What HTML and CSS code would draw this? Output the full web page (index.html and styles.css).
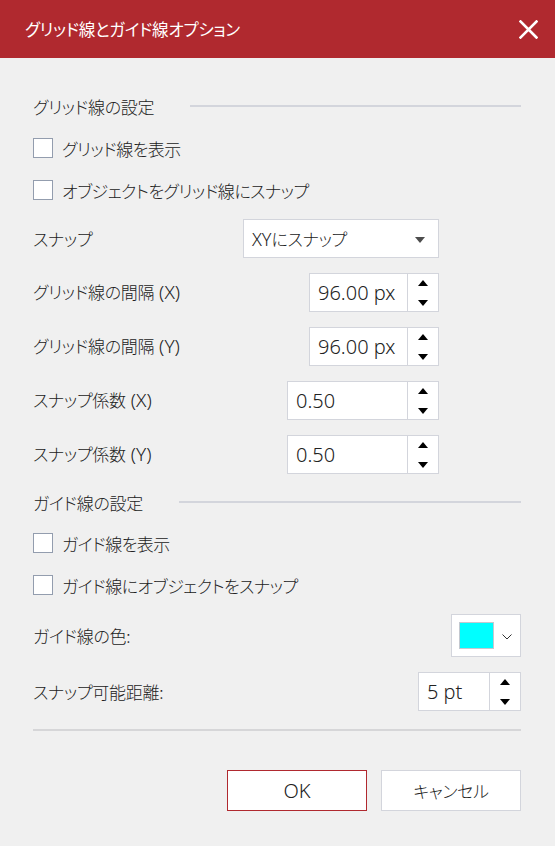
FILE: index.html
```html
<!DOCTYPE html>
<html lang="ja">
<head>
<meta charset="utf-8">
<title>グリッド線とガイド線オプション</title>
<link rel="stylesheet" href="styles.css">
</head>
<body>
<div class="dialog">
  <header class="titlebar">
    <h1 class="title">グリッド線とガイド線オプション</h1>
    <button class="close" aria-label="閉じる">
      <svg width="19" height="19" viewBox="0 0 19 19"><path d="M1.5 1.5 L17.5 17.5 M17.5 1.5 L1.5 17.5" stroke="#fff" stroke-width="2.6" stroke-linecap="square" fill="none"/></svg>
    </button>
  </header>

  <main class="content">
    <div class="section s-grid"><span class="section-title">グリッド線の設定</span><span class="rule"></span></div>

    <label class="check c-first"><span class="box"></span><span class="check-text">グリッド線を表示</span></label>
    <label class="check c-next"><span class="box"></span><span class="check-text">オブジェクトをグリッド線にスナップ</span></label>

    <div class="field grid-field f-select">
      <span class="label">スナップ</span>
      <div class="select"><span class="select-text"><span class="lat">XY</span>にスナップ</span><span class="caret"></span></div>
    </div>

    <div class="field grid-field f-spin">
      <span class="label">グリッド線の間隔<span class="lat"> (X)</span></span>
      <div class="spin spin-wide"><span class="value">96.00 px</span><span class="arrows"><i class="up"></i><i class="down"></i></span></div>
    </div>

    <div class="field grid-field f-spin">
      <span class="label">グリッド線の間隔<span class="lat"> (Y)</span></span>
      <div class="spin spin-wide"><span class="value">96.00 px</span><span class="arrows"><i class="up"></i><i class="down"></i></span></div>
    </div>

    <div class="field grid-field f-spin">
      <span class="label">スナップ係数<span class="lat"> (X)</span></span>
      <div class="spin spin-long"><span class="value">0.50</span><span class="arrows"><i class="up"></i><i class="down"></i></span></div>
    </div>

    <div class="field grid-field f-spin">
      <span class="label">スナップ係数<span class="lat"> (Y)</span></span>
      <div class="spin spin-long"><span class="value">0.50</span><span class="arrows"><i class="up"></i><i class="down"></i></span></div>
    </div>

    <div class="section s-guide"><span class="section-title">ガイド線の設定</span><span class="rule"></span></div>

    <label class="check c-guide"><span class="box"></span><span class="check-text">ガイド線を表示</span></label>
    <label class="check c-next"><span class="box"></span><span class="check-text">ガイド線にオブジェクトをスナップ</span></label>

    <div class="field f-color">
      <span class="label">ガイド線の色:</span>
      <div class="color-picker"><span class="swatch"></span>
        <svg class="chev" width="10" height="6" viewBox="0 0 10 6"><path d="M0.5 0.5 L5 5 L9.5 0.5" stroke="#333" stroke-width="1" fill="none"/></svg>
      </div>
    </div>

    <div class="field f-spin">
      <span class="label">スナップ可能距離:</span>
      <div class="spin spin-short"><span class="value">5 pt</span><span class="arrows"><i class="up"></i><i class="down"></i></span></div>
    </div>

    <div class="separator"></div>

    <div class="buttons">
      <button class="btn btn-primary"><span class="lat">OK</span></button>
      <button class="btn">キャンセル</button>
    </div>
  </main>
</div>
</body>
</html>
```

FILE: styles.css
```css
* { box-sizing: border-box; }

html, body {
  margin: 0;
  padding: 0;
}

body {
  width: 555px;
  height: 846px;
  background: #f0f0f0;
  font-family: "Noto Sans CJK JP", "Noto Sans", sans-serif;
  font-size: 17px;
  font-weight: 300;
  letter-spacing: -0.3px;
  font-feature-settings: "palt";
  color: #222;
  overflow: hidden;
}

.dialog {
  width: 555px;
  height: 846px;
  background: #f0f0f0;
}

.titlebar {
  height: 58px;
  background: #b0292f;
  display: flex;
  align-items: center;
  justify-content: space-between;
  padding: 0 17px 0 25px;
}

.title {
  margin: 0;
  font-size: 16.5px;
  font-weight: 400;
  color: #fff;
  line-height: 1;
  letter-spacing: -0.2px;
}

.close {
  border: 0;
  background: transparent;
  padding: 0;
  width: 19px;
  height: 19px;
  display: flex;
  cursor: pointer;
}

.content {
  padding: 36px 34px 0 33px;
  display: flex;
  flex-direction: column;
}

.lat {
  font-family: "Noto Sans", "Open Sans", sans-serif;
  font-size: 19px;
  font-weight: 300;
  letter-spacing: 0;
}

/* section headers */
.section {
  height: 24px;
  display: flex;
  align-items: center;
}
.s-guide { margin-top: 16px; }

.section-title { line-height: 1; white-space: nowrap; }

.rule {
  flex: 1;
  height: 2px;
  margin-left: 36px;
  background: #d3d5dc;
}

/* checkboxes */
.check {
  height: 20px;
  display: flex;
  align-items: center;
  gap: 9px;
  line-height: 1;
}
.c-first { margin-top: 20px; }
.c-next { margin-top: 22px; }
.c-guide { margin-top: 19px; }

.check-text { letter-spacing: -0.5px; }

.box {
  width: 20px;
  height: 20px;
  background: #fff;
  border: 1px solid #939dae;
  flex: none;
}

/* fields */
.field {
  display: flex;
  align-items: center;
  justify-content: space-between;
  line-height: 1;
}
.grid-field { padding-right: 82px; }

.f-select { margin-top: 19px; height: 39px; }
.f-spin { margin-top: 15px; height: 39px; }
.f-color { margin-top: 19px; height: 43px; }

.label { white-space: nowrap; }

.select {
  width: 196px;
  height: 39px;
  background: #fff;
  border: 1px solid #d3d5dc;
  display: flex;
  align-items: center;
  justify-content: space-between;
  padding: 0 13px 0 8px;
}
.select-text { font-size: 17px; }
.select-text .lat { font-size: 18px; }

.caret {
  width: 0;
  height: 0;
  border-left: 5px solid transparent;
  border-right: 5px solid transparent;
  border-top: 6px solid #4d4d4d;
  margin-top: 2px;
}

.spin {
  height: 39px;
  background: #fff;
  border: 1px solid #d3d5dc;
  display: flex;
}
.spin-wide { width: 130px; }
.spin-long { width: 152px; }
.spin-short { width: 103px; }

.value {
  flex: 1;
  display: flex;
  align-items: center;
  padding-left: 8px;
  font-family: "Noto Sans", "Open Sans", sans-serif;
  font-size: 20px;
  font-weight: 300;
  letter-spacing: 0;
  color: #222;
}

.arrows {
  width: 31px;
  flex: none;
  border-left: 1px solid #d3d5dc;
  display: flex;
  flex-direction: column;
  align-items: center;
  justify-content: space-between;
  padding: 6px 0 5px;
}

.up, .down {
  display: block;
  width: 0;
  height: 0;
  border-left: 5px solid transparent;
  border-right: 5px solid transparent;
}
.up { border-bottom: 6px solid #000; }
.down { border-top: 6px solid #000; }

.color-picker {
  width: 70px;
  height: 43px;
  background: #fff;
  border: 1px solid #d3d5dc;
  display: flex;
  align-items: center;
  padding-left: 7px;
  gap: 8px;
}

.swatch {
  width: 35px;
  height: 27px;
  background: #00ffff;
  border: 1px solid #c4c8cf;
}

.chev { margin-top: 2px; }

.separator {
  margin-top: 18px;
  height: 2px;
  background: #d6d6d8;
}

.buttons {
  margin-top: 39px;
  display: flex;
  justify-content: flex-end;
  gap: 14px;
}

.btn {
  width: 140px;
  height: 41px;
  background: #fff;
  border: 1px solid #d3d5dc;
  font-family: "Noto Sans CJK JP", "Noto Sans", sans-serif;
  font-feature-settings: "palt";
  font-size: 17px;
  font-weight: 300;
  letter-spacing: -0.3px;
  color: #222;
  padding: 0;
  display: flex;
  align-items: center;
  justify-content: center;
  line-height: 1;
}

.btn-primary { border-color: #b0292f; }
.btn-primary .lat { font-size: 20px; }
```
